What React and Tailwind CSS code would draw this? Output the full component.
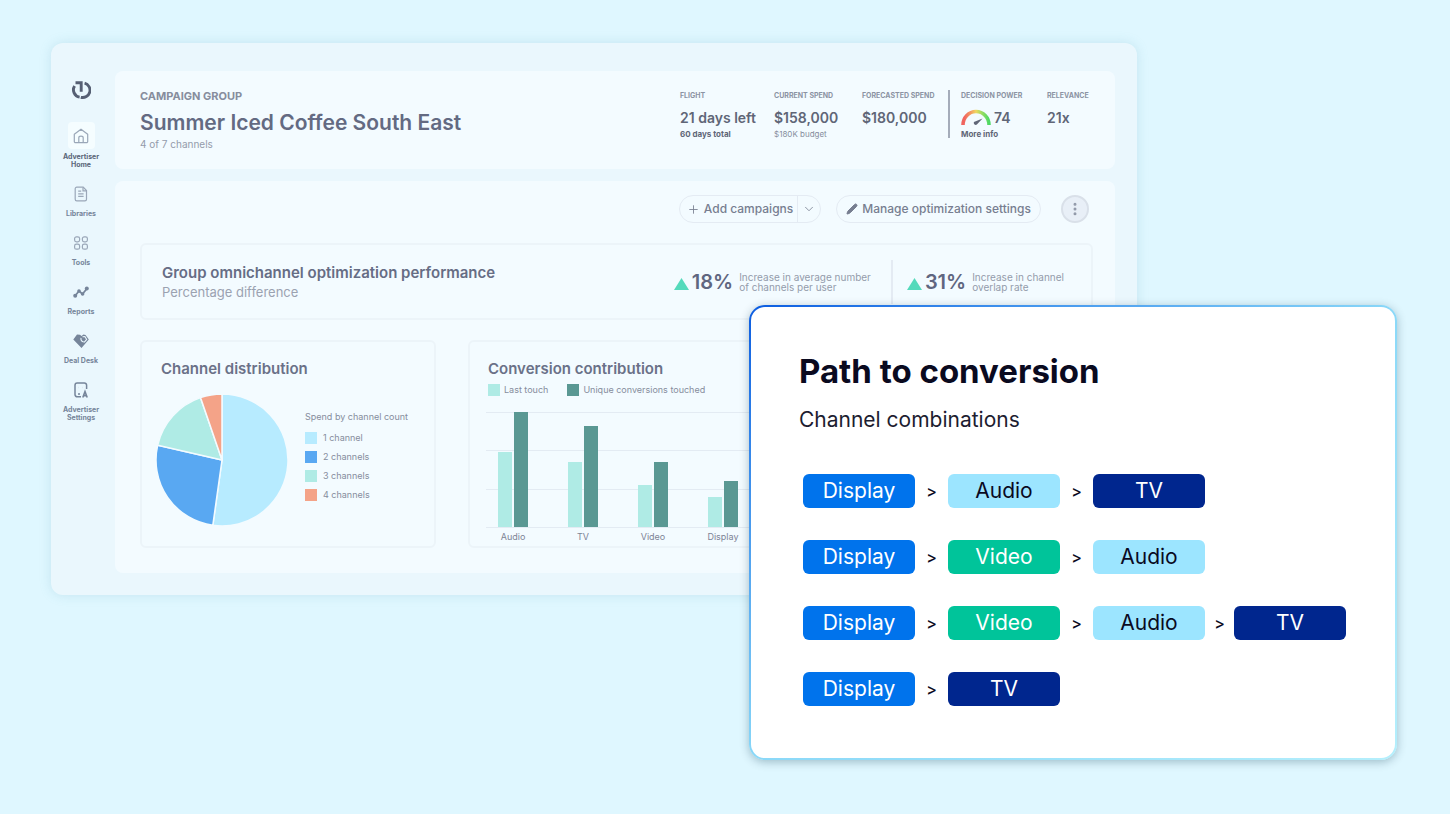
import React from 'react';
import { Plus, ChevronDown, Pencil, MoreVertical } from 'lucide-react';

const iconProps = {
  width: 16,
  height: 16,
  viewBox: '0 0 16 16',
  fill: 'none',
  stroke: 'currentColor',
  strokeWidth: 1.2,
};

const HomeIcon = () => (
  <svg {...iconProps}>
    <path d="M1.300 6.200L8 1.200l6.700 5v7.200a1.200 1.200 0 0 1-1.200 1.200h-11a1.200 1.200 0 0 1-1.200-1.200z" strokeLinejoin="round" />
    <path d="M5.800 14.500V9.800q0-1.600 2.200-1.600t2.200 1.600v4.700" />
  </svg>
);

const LibrariesIcon = () => (
  <svg {...iconProps}>
    <path d="M3.800 1.200h6.400l3.300 3.300v8.700a1.600 1.600 0 0 1-1.600 1.600H3.800a1.600 1.600 0 0 1-1.600-1.600V2.800a1.600 1.600 0 0 1 1.600-1.600z" />
    <path d="M5.200 5.200h3M5.200 7.800h5.400M5.200 10.400h5.400M10 1.500v3.300h3.300" />
  </svg>
);

const ToolsIcon = () => (
  <svg {...iconProps}>
    <rect x="1.6" y="1.8" width="5" height="5" rx="1.8" />
    <rect x="9.4" y="1.8" width="5" height="5" rx="1.8" />
    <rect x="1.6" y="9.2" width="5" height="5" rx="1.8" />
    <rect x="9.4" y="9.2" width="5" height="5" rx="1.8" />
  </svg>
);

const ReportsIcon = () => (
  <svg {...iconProps} strokeWidth="1.8">
    <path d="M2 12l4-5 3.5 3L14 4.500" />
    <g fill="currentColor" stroke="none">
      <circle cx="2.200" cy="11.800" r="2" />
      <circle cx="6" cy="7" r="1.800" />
      <circle cx="9.600" cy="10" r="1.800" />
      <circle cx="13.800" cy="4.500" r="2" />
    </g>
  </svg>
);

const DealIcon = () => (
  <svg {...iconProps}>
    <path d="M4 1.500L7 1.800 8.500 3l2-1.500 2 .5L15.800 6.500 8.500 15 .3 6.500z" fill="currentColor" stroke="none" />
    <path d="M8 4.800c-.4 2.200.6 4 2.800 4.200M9.500 3.800l2.400-.2 1.800 2.800-2.600 3" stroke="#eaf7fd" strokeWidth="1.100" />
  </svg>
);

const AccountIcon = () => (
  <svg {...iconProps} strokeWidth="1.500">
    <path d="M8 14.800H4.200A2.200 2.200 0 0 1 2 12.600V3.200A2.200 2.200 0 0 1 4.200 1h7.200a2.200 2.200 0 0 1 2.200 2.200V7" />
    <path d="M5 12h2M5.500 5.500h.1M9.500 5.500h.1" />
    <path d="M9.800 15.500l2.200-6 2.200 6M10.600 13.600h2.800" strokeWidth="1.600" />
  </svg>
);

const Logo = () => (
  <svg width="20" height="20" viewBox="0 0 20 20" fill="none" stroke="#565f73" strokeWidth="2.900">
    <path d="M13.600 3.200a7.300 7.300 0 0 1-3.800 14.100" />
    <path d="M8.600 17.100A7.300 7.300 0 0 1 3.600 6" />
    <path d="M4.500 2.800h5.700v9" />
  </svg>
);

const navItems = [
  { label: 'Advertiser Home', icon: <HomeIcon />, active: true },
  { label: 'Libraries', icon: <LibrariesIcon /> },
  { label: 'Tools', icon: <ToolsIcon /> },
  { label: 'Reports', icon: <ReportsIcon />, solid: true },
  { label: 'Deal Desk', icon: <DealIcon />, solid: true },
  { label: 'Advertiser Settings', icon: <AccountIcon />, solid: true },
];

const slices = [
  { label: '1 channel', color: '#b7ebff', dot: 'bg-[#b7ebff]', from: 0, to: 188 },
  { label: '2 channels', color: '#59a8f2', dot: 'bg-[#59a8f2]', from: 188, to: 283 },
  { label: '3 channels', color: '#afebe5', dot: 'bg-[#afebe5]', from: 283, to: 341 },
  { label: '4 channels', color: '#f4a388', dot: 'bg-[#f4a388]', from: 341, to: 360 },
];

const bars = [
  { label: 'Audio', last: 75, unique: 115 },
  { label: 'TV', last: 65, unique: 101 },
  { label: 'Video', last: 42, unique: 65 },
  { label: 'Display', last: 30, unique: 46 },
];

const paths = [
  ['Display', 'Audio', 'TV'],
  ['Display', 'Video', 'Audio'],
  ['Display', 'Video', 'Audio', 'TV'],
  ['Display', 'TV'],
];

const chipStyles = {
  Display: 'bg-[#0073ec] text-white',
  Audio: 'bg-[#9ce5ff] text-[#0a0a1f]',
  Video: 'bg-[#00c49a] text-white',
  TV: 'bg-[#00268e] text-white',
};

const slicePath = (from, to) => {
  const point = (deg) => {
    const a = (deg * Math.PI) / 180;
    return `${67 + 66 * Math.sin(a)} ${67 - 66 * Math.cos(a)}`;
  };
  return `M67 67L${point(from)}A66 66 0 ${to - from > 180 ? 1 : 0} 1 ${point(to)}Z`;
};

const Sidebar = () => (
  <nav className="w-[60px] shrink-0 flex flex-col items-center pt-[37px]">
    <Logo />
    <ul className="mt-[22px] w-full flex flex-col gap-[13px]">
      {navItems.map((item) => (
        <li key={item.label}>
          <a href="#" className="flex flex-col items-center">
            <span
              className={`flex items-center justify-center ${
                item.active ? 'size-[27px] rounded bg-[#f5fdff]' : 'h-6 w-6'
              } ${item.solid ? 'text-[#76859a]' : 'text-[#9aa7b8]'}`}
            >
              {item.icon}
            </span>
            <span
              className={`mt-1 w-[46px] text-center text-[7px] leading-[8px] font-bold ${
                item.active ? 'text-[#5b6679]' : 'text-[#76859a]'
              }`}
            >
              {item.label}
            </span>
          </a>
        </li>
      ))}
    </ul>
  </nav>
);

const Metric = ({ label, value, note, className, noteClass }) => (
  <div className={`pt-px ${className}`}>
    <p className="text-[7px] leading-[10px] font-bold text-[#8b93a3] whitespace-nowrap">{label}</p>
    <div className="mt-1 h-6 flex items-center gap-[3px] text-[14px] font-semibold text-[#5f6677] whitespace-nowrap">{value}</div>
    {note && <p className={`text-[8px] leading-[10px] whitespace-nowrap ${noteClass}`}>{note}</p>}
  </div>
);

const Gauge = () => (
  <svg width="30" height="18" viewBox="0 0 30 18" fill="none">
    <defs>
      <linearGradient id="gauge" x1="0" x2="1" y1="0" y2="0">
        <stop offset="0.050" stopColor="#f0645f" />
        <stop offset="0.300" stopColor="#f39a62" />
        <stop offset="0.500" stopColor="#f0d75f" />
        <stop offset="0.700" stopColor="#a3dc62" />
        <stop offset="1" stopColor="#4cd964" />
      </linearGradient>
    </defs>
    <path d="M2 17a13 13.500 0 0 1 26 0" stroke="url(#gauge)" strokeWidth="3.600" />
    <path d="M21.500 10.500l-5.600 6a2 2 0 0 1-3-2.400z" fill="#5f6677" />
  </svg>
);

const Header = () => (
  <header className="flex justify-between rounded-lg bg-[#f3fbff] pt-[18px] pr-[22px] pb-[18px] pl-[25px]">
    <div>
      <p className="text-[11px] leading-[14px] font-bold text-[#868d9d]">CAMPAIGN GROUP</p>
      <h1 className="mt-[6px] text-[21px] leading-7 font-semibold text-[#636a82]">Summer Iced Coffee South East</h1>
      <p className="text-[10px] leading-[14px] text-[#949bab]">4 of 7 channels</p>
    </div>
    <div className="flex pt-px">
      <Metric className="w-[94px]" label="FLIGHT" value="21 days left" note="60 days total" noteClass="font-bold text-[#5f6677]" />
      <Metric className="w-[88px]" label="CURRENT SPEND" value="$158,000" note="$180K budget" noteClass="text-[#868d9d]" />
      <Metric className="w-[86px]" label="FORECASTED SPEND" value="$180,000" />
      <div className="h-12 border-l-2 border-[#a4acba]" />
      <Metric
        className="ml-[11px] w-[86px]"
        label="DECISION POWER"
        value={<><Gauge />74</>}
        note={<a href="#">More info</a>}
        noteClass="font-bold text-[#5f6677]"
      />
      <Metric className="w-[46px]" label="RELEVANCE" value="21x" />
    </div>
  </header>
);

const Stat = ({ value, children }) => (
  <div className="flex items-center">
    <svg width="15" height="12" viewBox="0 0 15 12" className="mt-1">
      <path d="M7.500 0L15 12H0z" fill="#54dabb" />
    </svg>
    <span className="ml-[3px] text-[20px] leading-6 font-semibold text-[#5f6680]">{value}</span>
    <p className="ml-[6px] text-[10px] leading-[10px] text-[#949bab] whitespace-nowrap">{children}</p>
  </div>
);

const Toolbar = () => (
  <div className="flex items-center justify-end pr-1 text-[12px] font-medium text-[#777e90]">
    <div className="flex h-7 items-stretch rounded-full border border-[#e4ebf3]">
      <button className="flex items-center gap-1 pl-[7px] pr-1 whitespace-nowrap">
        <Plus size={13} strokeWidth={1.6} />
        Add campaigns
      </button>
      <button aria-label="More add options" className="flex items-center border-l border-[#e4ebf3] px-1">
        <ChevronDown size={14} strokeWidth={1.4} />
      </button>
    </div>
    <button className="ml-[15px] flex h-7 items-center gap-1 rounded-full border border-[#e4ebf3] px-[9px] whitespace-nowrap">
      <Pencil size={12} fill="currentColor" />
      Manage optimization settings
    </button>
    <button aria-label="More actions" className="ml-5 flex size-7 items-center justify-center rounded-full border-2 border-[#d9e0e9] bg-[#e8eff7] text-[#9199a9]">
      <MoreVertical size={16} strokeWidth={2.5} />
    </button>
  </div>
);

const ChannelDistribution = () => (
  <section className="w-[296px] h-[208px] shrink-0 rounded-md border-2 border-[#ecf4f9] pt-[17px] pl-[19px]">
    <h2 className="text-[15px] leading-5 font-semibold text-[#6a7188]">Channel distribution</h2>
    <div className="-ml-[6px] mt-[14px] flex">
      <svg width="134" height="134" viewBox="0 0 134 134" stroke="#f3fbff" strokeWidth="1.500">
        {slices.map((s) => (
          <path key={s.label} d={slicePath(s.from, s.to)} fill={s.color} />
        ))}
      </svg>
      <div className="ml-4 pt-[17px] text-[9px] leading-[14px] text-[#868d9d]">
        <p className="whitespace-nowrap">Spend by channel count</p>
        <ul className="mt-[7px] flex flex-col gap-[5px]">
          {slices.map((s) => (
            <li key={s.label} className="flex items-center gap-[6px]">
              <span className={`size-3 ${s.dot}`} />
              {s.label}
            </li>
          ))}
        </ul>
      </div>
    </div>
  </section>
);

const ConversionContribution = () => (
  <section className="min-w-0 flex-1 h-[208px] rounded-md border-2 border-[#ecf4f9] pt-[17px] px-[18px]">
    <h2 className="text-[15px] leading-5 font-semibold text-[#6a7188]">Conversion contribution</h2>
    <div className="mt-[5px] flex gap-[19px] text-[9px] leading-3 text-[#868d9d]">
      <span className="flex items-center gap-1"><i className="size-3 bg-[#afebe5]" />Last touch</span>
      <span className="flex items-center gap-1"><i className="size-3 bg-[#5a9893]" />Unique conversions touched</span>
    </div>
    <div className="-ml-[2px] mt-4 grid">
      <div className="col-start-1 row-start-1 h-[116px] flex flex-col justify-between">
        {[0, 1, 2, 3].map((n) => (
          <hr key={n} className="border-[#e3ebf3]" />
        ))}
      </div>
      <div className="col-start-1 row-start-1 flex gap-[26px] pl-[5px]">
        {bars.map((b) => (
          <div key={b.label} className="w-11 flex flex-col items-center">
            <div className="h-[115px] flex items-end gap-[2px]">
              <div className="w-[14px] bg-[#afebe5]" style={{ height: b.last }} />
              <div className="w-[14px] bg-[#5a9893]" style={{ height: b.unique }} />
            </div>
            <span className="mt-1 text-[9px] leading-3 text-[#7d8496]">{b.label}</span>
          </div>
        ))}
      </div>
    </div>
  </section>
);

const Dashboard = () => (
  <div className="flex min-w-[1080px] rounded-xl bg-[#eaf7fd] pb-[22px] pr-[22px] shadow-[0_0_12px_rgba(100,170,185,0.22)]">
    <Sidebar />
    <div className="ml-1 min-w-0 flex-1 pt-7 flex flex-col gap-3">
      <Header />
      <main className="rounded-lg bg-[#f3fbff] pt-[14px] pr-[22px] pb-[25px] pl-[25px]">
        <Toolbar />
        <section className="mt-5 flex h-[77px] items-center justify-between rounded-md border-2 border-[#ecf4f9] pl-5 pr-[27px]">
          <div>
            <h2 className="text-[15px] leading-5 font-semibold text-[#666d85]">Group omnichannel optimization performance</h2>
            <p className="text-[13px] leading-[18px] text-[#9ba2b1]">Percentage difference</p>
          </div>
          <div className="flex items-center">
            <Stat value="18%">Increase in average number<br />of channels per user</Stat>
            <div className="ml-5 mr-[14px] h-11 border-l-2 border-[#e4ebf3]" />
            <Stat value="31%">Increase in channel<br />overlap rate</Stat>
          </div>
        </section>
        <div className="mt-5 flex gap-8">
          <ChannelDistribution />
          <ConversionContribution />
        </div>
      </main>
    </div>
  </div>
);

const PathToConversion = () => (
  <aside className="absolute top-[305px] right-[53px] rounded-2xl bg-linear-to-br from-[#0b5ce0] via-[#8ad8f8] via-50% to-[#b5effc] p-[2px] shadow-[0_2px_10px_rgba(0,50,70,0.3)]">
    <div className="min-w-[643px] rounded-[14px] bg-white pt-[43px] pr-[49px] pb-[52px] pl-12">
      <h2 className="text-[33px] leading-[42px] font-bold text-[#0a0a1f]">Path to conversion</h2>
      <p className="mt-[14px] text-[21px] leading-7 text-[#1d1d30]">Channel combinations</p>
      <ul className="mt-10 ml-1 flex flex-col gap-8">
        {paths.map((path) => (
          <li key={path.join()} className="flex items-center">
            {path.map((step, i) => (
              <React.Fragment key={step}>
                {i > 0 && <span className={`${i === 3 ? 'w-[29px]' : 'w-[33px]'} text-center text-[16px] leading-5 font-medium text-[#0a0a1f]`}>&gt;</span>}
                <span className={`w-28 h-[34px] rounded-md text-center text-[21px] leading-[34px] ${chipStyles[step]}`}>{step}</span>
              </React.Fragment>
            ))}
          </li>
        ))}
      </ul>
    </div>
  </aside>
);

export default function App() {
  return (
    <div className="relative min-h-screen overflow-hidden bg-[#dff7ff] pt-[43px] pr-[313px] pl-[51px] pb-12 font-[Inter,sans-serif]">
      <Dashboard />
      <PathToConversion />
    </div>
  );
}
